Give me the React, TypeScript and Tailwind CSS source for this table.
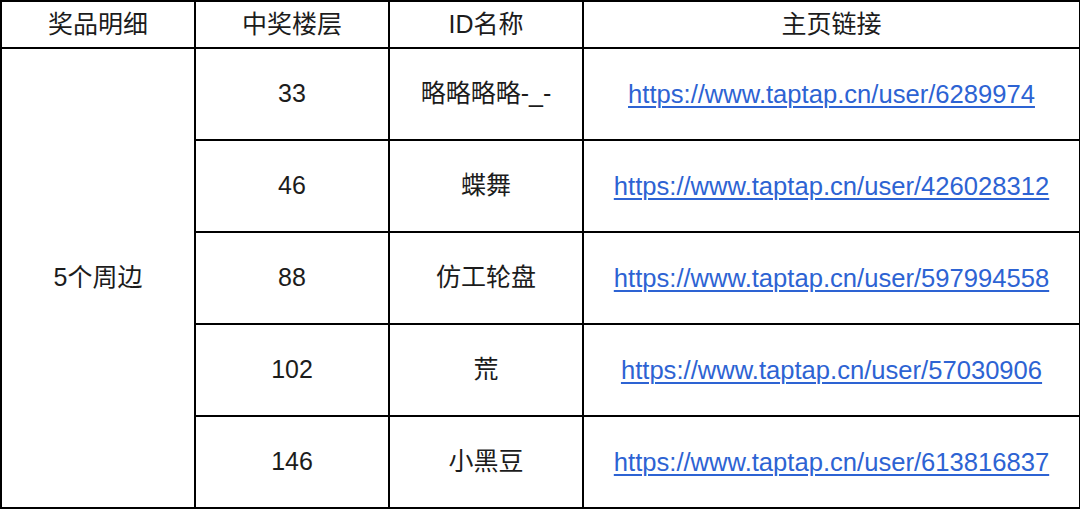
import React from "react";

const rows = [
  { floor: "33", name: "略略略略-_-", url: "https://www.taptap.cn/user/6289974" },
  { floor: "46", name: "蝶舞", url: "https://www.taptap.cn/user/426028312" },
  { floor: "88", name: "仿工轮盘", url: "https://www.taptap.cn/user/597994558" },
  { floor: "102", name: "荒", url: "https://www.taptap.cn/user/57030906" },
  { floor: "146", name: "小黑豆", url: "https://www.taptap.cn/user/613816837" },
];

export default function App() {
  return (
    <div className="w-[1080px] h-[509px] bg-white overflow-hidden">
      <table
        className="table-fixed border-collapse w-[1079px] text-[25px] text-[#1c1c1c]"
        style={{ fontFamily: '"Liberation Sans", Arial, "Noto Sans CJK SC", sans-serif' }}
      >
        <colgroup>
          <col className="w-[194px]" />
          <col className="w-[194px]" />
          <col className="w-[194px]" />
          <col className="w-[497px]" />
        </colgroup>
        <thead>
          <tr className="h-[47px]">
            <th className="border-2 border-black font-normal text-center p-0">奖品明细</th>
            <th className="border-2 border-black font-normal text-center p-0">中奖楼层</th>
            <th className="border-2 border-black font-normal text-center p-0">ID名称</th>
            <th className="border-2 border-black font-normal text-center p-0">主页链接</th>
          </tr>
        </thead>
        <tbody>
          {rows.map((r, i) => (
            <tr key={r.floor} className="h-[92px]">
              {i === 0 && (
                <td rowSpan={5} className="border-2 border-black text-center p-0">
                  5个周边
                </td>
              )}
              <td className="border-2 border-black text-center p-0">{r.floor}</td>
              <td className="border-2 border-black text-center p-0">{r.name}</td>
              <td className="border-2 border-black text-center p-0">
                <a href="#" className="text-[25.6px] text-[#2d63d3] underline underline-offset-[3px] decoration-[1.5px]">
                  {r.url}
                </a>
              </td>
            </tr>
          ))}
        </tbody>
      </table>
    </div>
  );
}
